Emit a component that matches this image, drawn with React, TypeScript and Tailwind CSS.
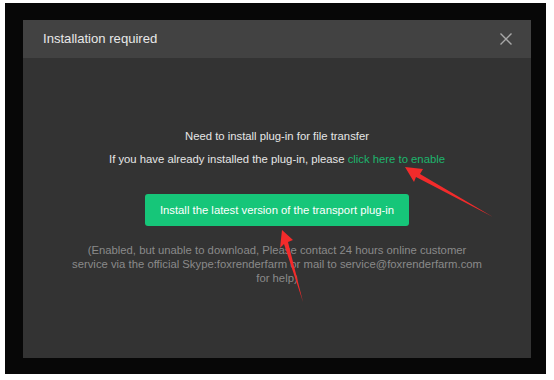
export default function App() {
  return (
    <div className="relative w-[554px] h-[380px] bg-white pt-[3px] pl-[5px] pr-[8px] pb-[6px]" style={{ fontFamily: '"Liberation Sans", Arial, sans-serif' }}>
      <div className="w-full h-full bg-[#070707] pt-[17px] pl-[18px] pr-[15px] pb-[16px]">
        <div className="w-full h-full bg-[#333333] flex flex-col">
          <div className="h-[38px] bg-[#424242] flex items-center justify-between pl-[20px] pr-[18px]">
            <span className="text-[13.1px] text-[#e8e8e8]">Installation required</span>
            <svg width="14" height="14" viewBox="0 0 14 14" className="block">
              <path d="M1.5 1.5 L12.5 12.5 M12.5 1.5 L1.5 12.5" stroke="#a8a8a8" strokeWidth="1.4" />
            </svg>
          </div>
          <div className="flex flex-col items-center pt-[70px]">
            <p className="text-[11.3px] leading-[16px] text-[#e6e6e6]">Need to install plug-in for file transfer</p>
            <p className="text-[11.3px] leading-[16px] text-[#e6e6e6] mt-[7px]">
              If you have already installed the plug-in, please <span className="text-[#1db56d]">click here to enable</span>
            </p>
            <button className="mt-[27px] w-[264px] h-[32px] rounded-[3px] bg-[#16c679] text-white text-[11.3px]">
              Install the latest version of the transport plug-in
            </button>
            <p className="mt-[17px] w-[412px] text-center text-[11.3px] leading-[14px] text-[#8a8a8a]">
              (Enabled, but unable to download, Please contact 24 hours online customer service via the official Skype:foxrenderfarm or mail to service@foxrenderfarm.com for help)
            </p>
          </div>
        </div>
      </div>
      <svg className="absolute left-0 top-0 pointer-events-none" width="554" height="380">
        <polygon points="405,167 423,169 420,174 493,217 416,177 414,182" fill="#f22b2b" />
        <polygon points="282,230 293,240 288,242 303,302 284,244 280,248" fill="#f22b2b" />
      </svg>
    </div>
  );
}
